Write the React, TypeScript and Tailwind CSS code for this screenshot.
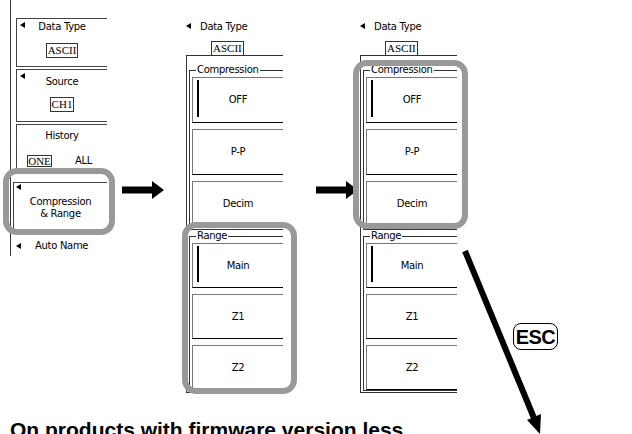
import type { ReactNode } from 'react'

const ui = "font-['DejaVu_Sans',sans-serif] text-[10px] tracking-[-0.3px] leading-[12px] text-black"
const serif = "font-['Liberation_Serif',serif] text-[11px] leading-[13px] text-black"

function Tri() {
  return <span className="block w-0 h-0 border-y-[3px] border-y-transparent border-r-[5px] border-r-black" />
}

function Val({ children, className = '' }: { children: ReactNode; className?: string }) {
  return <div className={`${serif} border border-[#333] px-[1px] ${className}`}>{children}</div>
}

function SideBox({ className = '', tri = 'left-[3px] top-[3px]', children }: { className?: string; tri?: string; children: ReactNode }) {
  return (
    <div className={`relative border-y border-l border-[#444] flex flex-col items-center ${className}`}>
      <span className={`absolute ${tri}`}><Tri /></span>
      {children}
    </div>
  )
}

function Arrow() {
  return (
    <svg width="42" height="18" viewBox="0 0 42 18">
      <rect x="0" y="5.5" width="31" height="7" fill="black" />
      <polygon points="30,0 42,9 30,18" fill="black" />
    </svg>
  )
}

function Btn({ label, active, h }: { label: string; active?: boolean; h: string }) {
  return (
    <div className={`relative ${h} border-t border-l border-t-[#777] border-l-[#777] border-b border-b-black flex items-center justify-center ${ui}`}>
      {active && <span className="absolute left-[4px] top-[2px] bottom-[5px] w-[2px] bg-black" />}
      {label}
    </div>
  )
}

function Group({ label, items, h, className = '', pb = '' }: { label: string; items: string[]; h: string; className?: string; pb?: string }) {
  return (
    <div className={`relative border-t border-l border-b border-[#333] pl-[2px] pt-[6px] ${pb} ${className}`}>
      <span className={`absolute left-[6px] -top-[7px] bg-white px-[1px] ${ui}`}>{label}</span>
      <div className="flex flex-col gap-[6px]">
        {items.map((it, i) => (
          <Btn key={it} label={it} active={i === 0} h={h} />
        ))}
      </div>
    </div>
  )
}

function MenuPanel() {
  return (
    <div className="w-[97px] h-[394px] overflow-hidden shrink-0">
      <div className="flex items-start pt-[21px]">
        <span className="mt-[2px]"><Tri /></span>
        <span className={`ml-[9px] ${ui}`}>Data Type</span>
      </div>
      <div className="flex">
        <Val className="ml-[25px] mt-[8px] h-[15px]">ASCII</Val>
      </div>
      <div className="-mt-[1px] w-[97px] border-t border-l border-b border-[#333] pl-[2px] pt-[14px] pb-[1px]">
        <Group label="Compression" items={['OFF', 'P-P', 'Decim']} h="h-[46px]" pb="pb-[2px]" />
        <Group label="Range" items={['Main', 'Z1', 'Z2']} h="h-[45px]" className="mt-[6px]" />
      </div>
    </div>
  )
}

export default function App() {
  return (
    <div className="relative w-[632px] h-[434px] overflow-hidden bg-white">
      <div className="flex items-start">
        {/* left soft-key menu */}
        <div className="w-[107px] shrink-0">
          <div className="ml-[10px] w-[97px] h-[256px] border-l border-[#333] pl-[5px] pt-[18px]">
            <SideBox className="h-[49px] pt-[2px]">
              <div className={ui}>Data Type</div>
              <Val className="mt-[10px] h-[15px]">ASCII</Val>
            </SideBox>
            <SideBox className="mt-[2px] h-[53px] pt-[6px]">
              <div className={ui}>Source</div>
              <Val className="mt-[9px] h-[15px]">CH1</Val>
            </SideBox>
            <div className="mt-[2px] h-[46px] border-y border-l border-[#444] pt-[5px]">
              <div className={`text-center ${ui}`}>History</div>
              <div className="flex items-center mt-[13px]">
                <div className={`ml-[10px] w-[25px] h-[12px] border border-[#333] flex items-center justify-center ${serif}`}>ONE</div>
                <span className={`ml-[23px] ${ui}`}>ALL</span>
              </div>
            </div>
            <SideBox className="mt-[12px] -ml-[3px] h-[48px] pt-[13px]" tri="left-[2px] top-[1px]">
              <div className={`text-center ${ui}`}>Compression</div>
              <div className={`text-center ${ui}`}>&amp; Range</div>
            </SideBox>
            <div className="mt-[10px] flex items-center">
              <Tri />
              <span className={`ml-[14px] ${ui}`}>Auto Name</span>
            </div>
          </div>
        </div>

        <div className="w-[79px] shrink-0 pt-[181px] pl-[15px]">
          <Arrow />
        </div>

        <MenuPanel />

        <div className="w-[77px] shrink-0 pt-[181px] pl-[33px]">
          <Arrow />
        </div>

        <MenuPanel />
      </div>

      <div className="mt-[24px] pl-[10px] font-['Liberation_Sans',Arial,sans-serif] font-bold text-[21px] leading-[24px] text-black whitespace-nowrap">
        On products with firmware version less
      </div>

      {/* grey highlight frames */}
      <div className="absolute left-[3px] top-[168px] w-[112px] h-[67px] rounded-[14px] border-[6px] border-[#999]" />
      <div className="absolute left-[182px] top-[222px] w-[115px] h-[172px] rounded-[14px] border-[6px] border-[#999]" />
      <div className="absolute left-[353px] top-[60px] w-[115px] h-[169px] rounded-[14px] border-[6px] border-[#999]" />

      {/* ESC arrow */}
      <svg className="absolute left-0 top-0" width="632" height="434" viewBox="0 0 632 434">
        <line x1="465" y1="251" x2="534" y2="418" stroke="black" strokeWidth="6" />
        <polygon points="527,420 541,414 540,434" fill="black" />
      </svg>
      <div className="absolute left-[513px] top-[323px] w-[45px] h-[27px] rounded-[8px] border-[1.5px] border-black flex items-center justify-center font-['Liberation_Sans',Arial,sans-serif] font-bold text-[20px] leading-none tracking-[-0.5px] text-black">
        ESC
      </div>
    </div>
  )
}
